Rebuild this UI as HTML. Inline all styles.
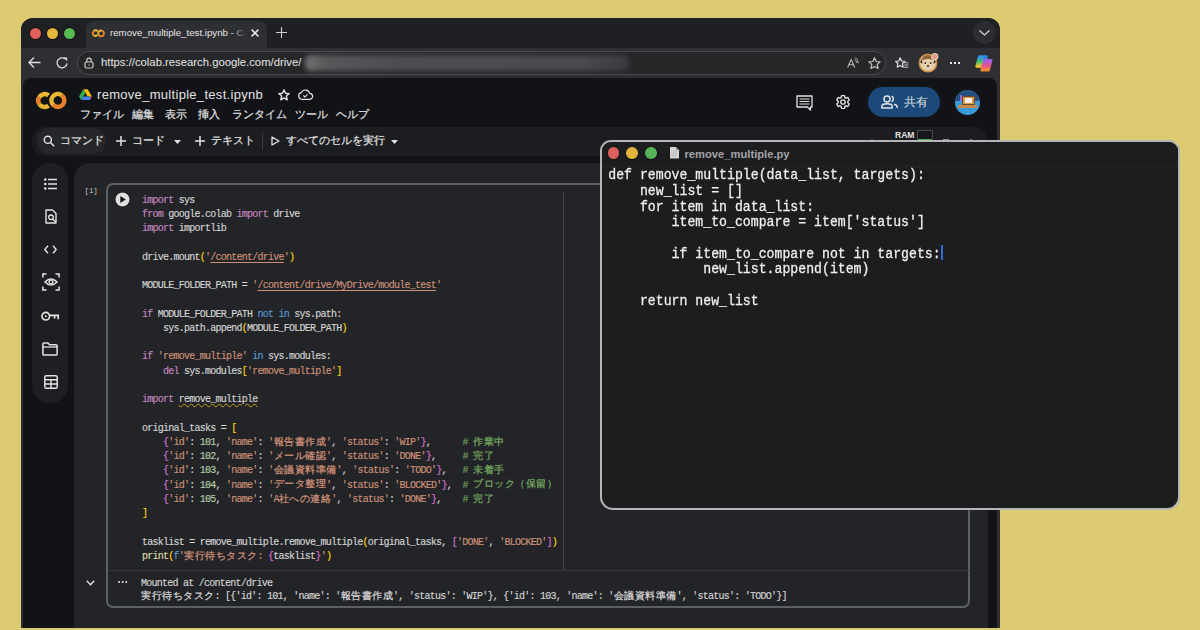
<!DOCTYPE html>
<html><head><meta charset="utf-8">
<style>
*{margin:0;padding:0;box-sizing:border-box}
html,body{width:1200px;height:630px;overflow:hidden;background:#dccb70;font-family:"Liberation Sans",sans-serif}
.a{position:absolute;white-space:pre}
svg{position:absolute;overflow:visible}
#win{position:absolute;left:21px;top:18px;width:979px;height:610px;background:#2e2f32;border-radius:12px 12px 0 0;overflow:hidden}
#tabbar{position:absolute;left:0;top:0;width:979px;height:30px;background:#1f2023}
.tl{position:absolute;top:9.5px;width:11px;height:11px;border-radius:50%;box-shadow:0 0 0 0.7px #0c0c0e}
#tab{position:absolute;left:65px;top:3px;width:181px;height:27px;background:#2e2f32;border-radius:8px 8px 0 0}
#addr{position:absolute;left:0;top:30px;width:979px;height:30px;background:#2e2f32}
#url{position:absolute;left:56px;top:3px;width:809px;height:24px;border-radius:12px;background:#262729;border:1px solid #4a4b4e}
#colab{position:absolute;left:2px;top:60px;width:974px;height:560px;background:#111316;border-radius:8px 8px 0 0;overflow:hidden}
#tool{position:absolute;left:9px;top:49px;width:955px;height:29px;background:#1c1d20;border-radius:14px}
#side{position:absolute;left:9px;top:85px;width:36px;height:240px;background:#1e1f22;border-radius:18px}
#nb{position:absolute;left:51px;top:85px;width:914px;height:480px;background:#222427;border-radius:16px 16px 0 0}
#cell{position:absolute;left:83px;top:105px;width:864px;height:425px;border:2px solid #5c6064;border-radius:7px}
.jp{font-size:10.6px;color:#e3e3e3;-webkit-text-stroke:0.2px #e3e3e3}
.code{position:absolute;font-family:"Liberation Mono",monospace;font-size:10px;letter-spacing:-0.75px;line-height:14.25px;color:#d4d4d4;white-space:pre;-webkit-text-stroke:0.15px currentColor}
i{display:inline-block;width:10.5px;font-style:normal;text-align:center;font-family:"Liberation Sans",sans-serif;font-size:9.6px;letter-spacing:0;vertical-align:top;height:14.25px;line-height:14.25px;position:relative;top:-1.2px;-webkit-text-stroke:0.25px currentColor}
.out i{height:13px;line-height:13px}
.su{color:#ce9178;text-decoration:underline;text-decoration-thickness:1px;text-underline-offset:1.5px}.w{text-decoration:underline wavy #c9a21a;text-decoration-thickness:1px}
.k{color:#c586c0}.s{color:#ce9178}.b{color:#569cd6}.n{color:#b5cea8}.c{color:#76a860}.y{color:#ffd700}.p{color:#da70d6}.f{color:#dcdcaa}
#py{position:absolute;left:600px;top:140px;width:580px;height:370px;background:#1c1d1f;border:2px solid #b5b5b7;border-radius:11px 11px 13px 13px;overflow:hidden}
.pc{position:absolute;left:6.3px;top:26px;transform:scaleY(1.12);transform-origin:0 0;font-family:"Liberation Mono",monospace;font-size:13.2px;line-height:13.95px;color:#f0f0f0;white-space:pre;-webkit-text-stroke:0.25px #f0f0f0}
</style></head><body>
<div id="win">
  <div id="tabbar">
    <div class="tl" style="left:8.5px;background:#df615b"></div>
    <div class="tl" style="left:25.8px;background:#e5b83b"></div>
    <div class="tl" style="left:43px;background:#5bb953"></div>
    <div id="tab"></div>
    <!-- tab colab icon -->
    <svg style="left:70px;top:10px" width="14" height="10" viewBox="0 0 14 10"><g fill="none" stroke-width="1.9"><path d="M6.6 3.2A2.9 2.9 0 0 0 2.6 3.3" stroke="#eab92f"/><path d="M2.6 3.3A2.9 2.9 0 0 0 2.7 7.3" stroke="#e8822a"/><path d="M2.7 7.3A2.9 2.9 0 0 0 6.6 6.9" stroke="#eab92f"/><path d="M11.3 2.8A2.9 2.9 0 0 0 7.7 7.1" stroke="#eab92f"/><path d="M7.7 7.1A2.9 2.9 0 1 0 11.3 2.8" stroke="#e8822a"/></g></svg>
    <div class="a" style="left:89px;top:9px;font-size:9.7px;color:#e6e6e6;width:139px;overflow:hidden">remove_multiple_test.ipynb - C<span style="color:#8a8a8a">o</span></div><div class="a" style="left:210px;top:8px;width:20px;height:14px;background:linear-gradient(90deg,rgba(46,47,50,0),#2e2f32 85%)"></div>
    <svg style="left:230px;top:11px" width="8" height="8" viewBox="0 0 8 8"><path d="M0.6 0.6L7.4 7.4M7.4 0.6L0.6 7.4" stroke="#ececec" stroke-width="1.5"/></svg>
    <svg style="left:255px;top:9px" width="11" height="11" viewBox="0 0 11 11"><path d="M5.5 0V11M0 5.5H11" stroke="#d0d0d0" stroke-width="1.1"/></svg>
    <div class="a" style="left:952px;top:3px;width:23px;height:23px;border-radius:50%;background:#2c2d30"></div>
    <svg style="left:958px;top:12px" width="11" height="6" viewBox="0 0 11 6"><path d="M0.5 0.5L5.5 5L10.5 0.5" fill="none" stroke="#d8d8d8" stroke-width="1.2"/></svg>
  </div>
  <div id="addr">
    <svg style="left:7px;top:9px" width="13" height="11" viewBox="0 0 13 11"><path d="M6 0.5L1 5.5L6 10.5M1 5.5H12.5" fill="none" stroke="#e0e0e0" stroke-width="1.3"/></svg>
    <svg style="left:35px;top:9px" width="12" height="12" viewBox="0 0 12 12"><path d="M11 6.4A5 5 0 1 1 9.4 2.1" fill="none" stroke="#e0e0e0" stroke-width="1.3"/><path d="M7.6 0.6L11.2 0.6L11.2 4.2Z" fill="#e0e0e0"/></svg>
    <div id="url"></div>
    <svg style="left:63px;top:9px" width="10" height="12" viewBox="0 0 10 12"><rect x="1" y="5" width="8" height="6" rx="1.5" fill="none" stroke="#cfcfcf" stroke-width="1.2"/><path d="M2.8 5V3.4a2.2 2.2 0 0 1 4.4 0V5" fill="none" stroke="#cfcfcf" stroke-width="1.2"/><rect x="4.4" y="7.4" width="1.2" height="1.2" fill="#cfcfcf"/></svg>
    <div class="a" style="left:80px;top:8px;font-size:11.3px;color:#e6e6e6">https://colab.research.google.com/drive/</div>
    <div class="a" style="left:284px;top:7px;width:324px;height:16px;background:linear-gradient(90deg,#737376,#59595c 6%,#4c4d50 30%,#4a4b4e 85%,#3a3b3e);filter:blur(2.5px);border-radius:6px"></div>
    <svg style="left:826px;top:10.9px" width="9" height="9" viewBox="0 0 9 9"><path d="M0.6 8.6L4.2 0.6L7.8 8.6M1.9 5.7H6.5" fill="none" stroke="#bcbcbc" stroke-width="1.1"/></svg>
    <svg style="left:833px;top:9px" width="5" height="7" viewBox="0 0 5 7"><path d="M0.8 0.6Q4.3 1.8 4.4 6.3M0.6 2.6Q2.6 3.3 2.7 6" fill="none" stroke="#bcbcbc" stroke-width="0.9"/></svg>
    <svg style="left:846.6px;top:8.8px" width="13" height="12.5" viewBox="0 0 13 12.5"><path d="M6.5 0.8L8.2 4.5L12.1 4.8L9.2 7.4L10.1 11.5L6.5 9.4L2.9 11.5L3.8 7.4L0.9 4.8L4.8 4.5Z" fill="none" stroke="#c4c4c4" stroke-width="1.2" stroke-linejoin="round"/></svg>
    <svg style="left:873.5px;top:9.3px" width="14" height="12" viewBox="0 0 14 12"><path d="M5.2 0.8L6.6 4L10 4.3L7.5 6.5L8.2 10.2L5.2 8.4L2.2 10.2L2.9 6.5L0.6 4.3L3.8 4Z" fill="none" stroke="#dedede" stroke-width="1.2" stroke-linejoin="round"/><path d="M9.2 5.8H13.3M9.4 8H13.3M9 10.2H13.3" stroke="#dedede" stroke-width="0.9"/></svg>
    <svg style="left:897px;top:5px" width="21" height="20" viewBox="0 0 21 20"><circle cx="10" cy="10" r="8.8" fill="#e7cfaa" stroke="#c98a42" stroke-width="1.4"/><path d="M3.5 7.5Q4.5 2.2 10 2Q15.5 2.2 16.5 7.5Q13 5.8 10 6Q7 5.8 3.5 7.5Z" fill="#8e6038"/><path d="M2 9L3.8 6.5L4.5 11Z M18 9L16.2 6.5L15.5 11Z" fill="#3a2a20"/><circle cx="7.3" cy="10" r="0.9" fill="#2a2a2a"/><circle cx="12.7" cy="10" r="0.9" fill="#2a2a2a"/><circle cx="10" cy="13" r="1" fill="#2a1a10"/><circle cx="16.8" cy="3.6" r="3.2" fill="#e39a82" stroke="#e8e0d8" stroke-width="1"/></svg>
    <div class="a" style="left:929px;top:14.1px;width:2px;height:2px;background:#e8e8e8;box-shadow:4px 0 #e8e8e8,8px 0 #e8e8e8"></div>
    <svg style="left:954.2px;top:7px" width="18" height="17" viewBox="0 0 18 17"><defs><linearGradient id="cpl" x1="0" y1="0" x2="0" y2="1"><stop offset="0" stop-color="#2f8ff2"/><stop offset="0.5" stop-color="#3fbf6a"/><stop offset="1" stop-color="#f5c12e"/></linearGradient><linearGradient id="cpr" x1="0" y1="0" x2="0" y2="1"><stop offset="0" stop-color="#a35ce6"/><stop offset="0.55" stop-color="#e8548c"/><stop offset="1" stop-color="#f28a2e"/></linearGradient></defs><path d="M4.3 1.6H11.5L8.6 11.5H1.6Z" fill="url(#cpl)" stroke="url(#cpl)" stroke-width="2.6" stroke-linejoin="round"/><path d="M9.6 5.4H16.2L13.6 15.2H6.6Z" fill="url(#cpr)" stroke="url(#cpr)" stroke-width="2.6" stroke-linejoin="round"/><path d="M9.7 1.8L12 1.6L9 5" fill="#2563d8" opacity="0.8"/></svg>
  </div>
  <div id="colab">

    <!-- colab logo -->
    <svg style="left:13px;top:14px" width="31" height="18" viewBox="0 0 31 18"><g fill="none" stroke-width="4.5"><path d="M12.58 3.35A6.45 6.45 0 0 0 3.11 5.28" stroke="#e9b732"/><path d="M3.11 5.28A6.45 6.45 0 0 0 3.42 12.2" stroke="#e8822a"/><path d="M3.42 12.2A6.45 6.45 0 0 0 12.58 13.65" stroke="#e9b732"/><path d="M25.78 3.35A6.45 6.45 0 0 0 17.5 13.22" stroke="#e9b732"/><path d="M17.5 13.22A6.45 6.45 0 1 0 25.78 3.35" stroke="#e8822a"/></g></svg>
    <!-- drive icon -->
    <svg style="left:56px;top:11px" width="13" height="11" viewBox="0 0 13 11"><path d="M4.3 0.3H8.7L13 7.6H8.6Z" fill="#fbbc04"/><path d="M4.3 0.3L0 7.6L2.2 11L6.5 3.8Z" fill="#34a853"/><path d="M2.2 11H10.8L13 7.6H4.4Z" fill="#4285f4"/><path d="M10.8 11L13 7.6H11.2Z" fill="#ea4335"/></svg>
    <div class="a" style="left:74px;top:9px;font-size:13px;letter-spacing:0.3px;color:#e3e3e3">remove_multiple_test.ipynb</div>
    <svg style="left:255px;top:11px" width="12" height="12" viewBox="0 0 12 12"><path d="M6 0.9L7.5 4.3L11.2 4.6L8.4 7.1L9.2 10.8L6 8.9L2.8 10.8L3.6 7.1L0.8 4.6L4.5 4.3Z" fill="none" stroke="#e3e3e3" stroke-width="1.4" stroke-linejoin="round"/></svg>
    <svg style="left:275px;top:11px" width="15" height="11" viewBox="0 0 15 11"><path d="M4 10.3H11.5A3 3 0 0 0 11.7 4.3A4.5 4.5 0 0 0 3.3 3.6A3.4 3.4 0 0 0 4 10.3Z" fill="none" stroke="#e3e3e3" stroke-width="1.2"/><path d="M5.3 6.5L6.9 8L9.6 5.3" fill="none" stroke="#e3e3e3" stroke-width="1.1"/></svg>
    <div class="a jp" style="left:57px;top:30px">ファイル</div>
    <div class="a jp" style="left:109px;top:30px">編集</div>
    <div class="a jp" style="left:142px;top:30px">表示</div>
    <div class="a jp" style="left:175px;top:30px">挿入</div>
    <div class="a jp" style="left:209px;top:30px">ランタイム</div>
    <div class="a jp" style="left:272px;top:30px">ツール</div>
    <div class="a jp" style="left:313px;top:30px">ヘルプ</div>
    <!-- right header -->
    <svg style="left:773px;top:17px" width="17" height="16" viewBox="0 0 17 16"><path d="M1 1H16V12H14.5V15L11.5 12H1Z" fill="none" stroke="#e3e3e3" stroke-width="1.3" stroke-linejoin="round"/><path d="M3.5 4H13.5M3.5 6.5H13.5M3.5 9H13.5" stroke="#e3e3e3" stroke-width="1.2"/></svg>
    <svg style="left:812px;top:16px" width="16" height="16" viewBox="0 0 24 24"><path fill="none" stroke="#e3e3e3" stroke-width="2" d="M19.14 12.94c.04-.3.06-.61.06-.94 0-.32-.02-.64-.07-.94l2.03-1.58a.49.49 0 0 0 .12-.61l-1.92-3.32a.488.488 0 0 0-.59-.22l-2.39.96c-.5-.38-1.03-.7-1.62-.94l-.36-2.54a.484.484 0 0 0-.48-.41h-3.84c-.24 0-.43.17-.47.41l-.36 2.54c-.59.24-1.130.57-1.62.94l-2.39-.96c-.22-.08-.47 0-.59.22L2.74 8.87c-.12.21-.08.47.12.61l2.03 1.58c-.05.3-.09.63-.09.94s.02.64.07.94l-2.03 1.58a.49.49 0 0 0-.12.61l1.92 3.32c.12.22.37.29.59.22l2.39-.96c.5.38 1.03.7 1.62.94l.36 2.54c.05.24.24.41.48.41h3.84c.24 0 .44-.17.47-.41l.36-2.54c.59-.24 1.13-.56 1.62-.94l2.39.96c.22.08.47 0 .59-.22l1.920-3.32c.12-.22.07-.47-.12-.61l-2.01-1.58z"/><circle cx="12" cy="12" r="3.3" fill="none" stroke="#e3e3e3" stroke-width="2"/></svg>
    <div class="a" style="left:845px;top:9px;width:72px;height:30px;border-radius:15px;background:#1b4a7a"></div>
    <svg style="left:858px;top:17px" width="17" height="14" viewBox="0 0 17 14"><circle cx="6" cy="4" r="3" fill="none" stroke="#e3e3e3" stroke-width="1.5"/><path d="M0.8 13V11.5Q0.8 8.8 6 8.8Q11.2 8.8 11.2 11.5V13Z" fill="none" stroke="#e3e3e3" stroke-width="1.5" stroke-linejoin="round"/><path d="M10.5 1.2A3 3 0 0 1 10.5 6.8M13 9.2Q16.2 10 16.2 12V13" fill="none" stroke="#e3e3e3" stroke-width="1.5"/></svg>
    <div class="a" style="left:881px;top:16px;font-size:12px;color:#e3e3e3">共有</div>
    <div class="a" style="left:932px;top:12px;width:25px;height:25px;border-radius:50%;background:#3b9ad8;overflow:hidden">
      <div class="a" style="left:0;top:0;width:25px;height:11px;background:#24507f"></div>
      <div class="a" style="left:7px;top:6px;width:13px;height:9px;background:#d89a3a;border:1px solid #6a4a2a"></div>
      <div class="a" style="left:10px;top:8px;width:7px;height:5px;background:#f0f0f0"></div>
      <div class="a" style="left:3px;top:15px;width:19px;height:3px;background:#c88a4a"></div>
      <div class="a" style="left:5px;top:5px;width:2px;height:6px;background:#9a6ad8"></div>
    </div>
    <div id="tool"></div>
    <!-- toolbar -->
    <div class="a" style="left:14px;top:50px;width:69px;height:26px;border-radius:13px;background:#25272a"></div>
    <svg style="left:20px;top:57px" width="12" height="12" viewBox="0 0 12 12"><circle cx="4.8" cy="4.8" r="3.6" fill="none" stroke="#e3e3e3" stroke-width="1.4"/><path d="M7.5 7.5L11.2 11.2" stroke="#e3e3e3" stroke-width="1.5"/></svg>
    <div class="a jp" style="left:37px;top:56px">コマンド</div>
    <svg style="left:93px;top:58px" width="10" height="10" viewBox="0 0 10 10"><path d="M5 0V10M0 5H10" stroke="#e3e3e3" stroke-width="1.5"/></svg>
    <div class="a jp" style="left:109px;top:56px">コード</div>
    <svg style="left:151px;top:62px" width="7" height="4" viewBox="0 0 7 4"><path d="M0 0H7L3.5 4Z" fill="#e3e3e3"/></svg>
    <svg style="left:172px;top:58px" width="10" height="10" viewBox="0 0 10 10"><path d="M5 0V10M0 5H10" stroke="#e3e3e3" stroke-width="1.5"/></svg>
    <div class="a jp" style="left:188px;top:56px">テキスト</div>
    <div class="a" style="left:239px;top:55px;width:1px;height:17px;background:#3c3d40"></div>
    <svg style="left:248px;top:58px" width="9" height="10" viewBox="0 0 9 10"><path d="M1 1L8 5L1 9Z" fill="none" stroke="#e3e3e3" stroke-width="1.3" stroke-linejoin="round"/></svg>
    <div class="a jp" style="left:263px;top:56px">すべてのセルを実行</div>
    <svg style="left:368px;top:62px" width="7" height="4" viewBox="0 0 7 4"><path d="M0 0H7L3.5 4Z" fill="#e3e3e3"/></svg>
    <svg style="left:842px;top:61px" width="8" height="6" viewBox="0 0 8 6"><path d="M0.5 3L3 5.5L7.5 0.5" fill="none" stroke="#5bb974" stroke-width="1.3"/></svg>
    <div class="a" style="left:872px;top:52px;font-size:8.5px;font-weight:bold;color:#e3e3e3">RAM</div>
    <div class="a" style="left:894px;top:52px;width:16px;height:10px;border:1px solid #4a4d51;border-radius:2px;background:#17181a;border-bottom:1.5px solid #4caf50"></div>
    <svg style="left:944px;top:61px" width="8" height="5" viewBox="0 0 8 5"><path d="M0.6 4.4L4 1L7.4 4.4" fill="none" stroke="#e3e3e3" stroke-width="1.4"/></svg><div class="a" style="left:920px;top:61px;width:6px;height:3px;background:#8a8f94"></div>
    <!-- sidebar -->
    <div id="side"></div>
    <svg style="left:21px;top:100px" width="13" height="12" viewBox="0 0 13 12"><circle cx="1.3" cy="1.5" r="1.3" fill="#e3e3e3"/><circle cx="1.3" cy="6" r="1.3" fill="#e3e3e3"/><circle cx="1.3" cy="10.5" r="1.3" fill="#e3e3e3"/><path d="M4 1.5H13M4 6H13M4 10.5H13" stroke="#e3e3e3" stroke-width="1.5"/></svg>
    <svg style="left:22px;top:131px" width="12" height="15" viewBox="0 0 12 15"><path d="M1 1H7.5L11 4.5V14H1Z" fill="none" stroke="#e3e3e3" stroke-width="1.4" stroke-linejoin="round"/><circle cx="6" cy="8.3" r="2.3" fill="none" stroke="#e3e3e3" stroke-width="1.3"/><path d="M7.6 10L10.5 12.8" stroke="#e3e3e3" stroke-width="1.4"/></svg>
    <svg style="left:21px;top:167px" width="13" height="9" viewBox="0 0 13 9"><path d="M4 0.8L0.8 4.5L4 8.2M9 0.8L12.2 4.5L9 8.2" fill="none" stroke="#e3e3e3" stroke-width="1.4"/></svg>
    <svg style="left:18.6px;top:195px" width="18" height="18" viewBox="0 0 18 18"><path d="M0.9 4.5V0.9H4.5M13.5 0.9H17.1V4.5M17.1 13.5V17.1H13.5M4.5 17.1H0.9V13.5" fill="none" stroke="#e3e3e3" stroke-width="1.5"/><path d="M3 9Q9 2.8 15 9Q9 15.2 3 9Z" fill="none" stroke="#e3e3e3" stroke-width="1.5"/><circle cx="9" cy="9" r="1.9" fill="none" stroke="#e3e3e3" stroke-width="1.4"/></svg>
    <svg style="left:17.8px;top:233px" width="18" height="11" viewBox="0 0 18 11"><circle cx="4.8" cy="5.2" r="3.8" fill="none" stroke="#e3e3e3" stroke-width="1.7"/><circle cx="4.8" cy="5.2" r="1" fill="#e3e3e3"/><path d="M8.6 4.3H17.2V8.2M13.6 4.3V7.6" fill="none" stroke="#e3e3e3" stroke-width="1.7"/></svg>
    <svg style="left:19px;top:264px" width="16" height="14" viewBox="0 0 16 14"><path d="M2 0.9H6L7.6 2.7H14Q15.1 2.7 15.1 3.8V11.9Q15.1 13 14 13H2Q0.9 13 0.9 11.9V2Q0.9 0.9 2 0.9Z" fill="none" stroke="#e3e3e3" stroke-width="1.5" stroke-linejoin="round"/><path d="M0.9 5H15.1" stroke="#e3e3e3" stroke-width="1.3"/></svg>
    <svg style="left:20.5px;top:296.5px" width="14" height="14" viewBox="0 0 14 14"><rect x="0.8" y="0.8" width="12.4" height="12.4" rx="1.5" fill="none" stroke="#e3e3e3" stroke-width="1.5"/><path d="M0.8 4.8H13.2M0.8 9H13.2M7 4.8V13.2" stroke="#e3e3e3" stroke-width="1.4"/></svg>
    <!-- notebook -->
    <div id="nb"></div>
    <div class="a" style="left:61.5px;top:108.5px;font-family:'Liberation Mono',monospace;font-size:7.4px;color:#c8c8c8">[1]</div>
    <div id="cell"></div>
    <svg style="left:91.6px;top:113.5px" width="15" height="15" viewBox="0 0 15 15"><circle cx="7.5" cy="7.5" r="7.8" fill="#141517"/><circle cx="7.5" cy="7.5" r="7" fill="#dedede"/><path d="M5.3 4V11L10.8 7.5Z" fill="#151618"/></svg>
    <div class="a" style="left:540px;top:114px;width:1px;height:378px;background:#3f4246"></div>
    <div class="code" style="left:119px;top:115.5px"><span class="k">import</span> sys
<span class="k">from</span> google.colab <span class="k">import</span> drive
<span class="k">import</span> importlib

drive.mount<span class="y">(</span><span class="s">&#x27;<span class="su">/content/drive</span>&#x27;</span><span class="y">)</span>

MODULE_FOLDER_PATH = <span class="s">&#x27;<span class="su">/content/drive/MyDrive/module_test</span>&#x27;</span>

<span class="k">if</span> MODULE_FOLDER_PATH <span class="b">not</span> <span class="b">in</span> sys.path:
    sys.path.append<span class="y">(</span>MODULE_FOLDER_PATH<span class="y">)</span>

<span class="k">if</span> <span class="s">&#x27;remove_multiple&#x27;</span> <span class="b">in</span> sys.modules:
    <span class="k">del</span> sys.modules<span class="y">[</span><span class="s">&#x27;remove_multiple&#x27;</span><span class="y">]</span>

<span class="k">import</span> <span class="w">remove_multiple</span>

original_tasks = <span class="y">[</span>
    <span class="p">{</span><span class="s">&#x27;id&#x27;</span>: <span class="n">101</span>, <span class="s">&#x27;name&#x27;</span>: <span class="s">&#x27;<i>報</i><i>告</i><i>書</i><i>作</i><i>成</i>&#x27;</span>, <span class="s">&#x27;status&#x27;</span>: <span class="s">&#x27;WIP&#x27;</span><span class="p">}</span>,      <span class="c"># <i>作</i><i>業</i><i>中</i></span>
    <span class="p">{</span><span class="s">&#x27;id&#x27;</span>: <span class="n">102</span>, <span class="s">&#x27;name&#x27;</span>: <span class="s">&#x27;<i>メ</i><i>ー</i><i>ル</i><i>確</i><i>認</i>&#x27;</span>, <span class="s">&#x27;status&#x27;</span>: <span class="s">&#x27;DONE&#x27;</span><span class="p">}</span>,     <span class="c"># <i>完</i><i>了</i></span>
    <span class="p">{</span><span class="s">&#x27;id&#x27;</span>: <span class="n">103</span>, <span class="s">&#x27;name&#x27;</span>: <span class="s">&#x27;<i>会</i><i>議</i><i>資</i><i>料</i><i>準</i><i>備</i>&#x27;</span>, <span class="s">&#x27;status&#x27;</span>: <span class="s">&#x27;TODO&#x27;</span><span class="p">}</span>,   <span class="c"># <i>未</i><i>着</i><i>手</i></span>
    <span class="p">{</span><span class="s">&#x27;id&#x27;</span>: <span class="n">104</span>, <span class="s">&#x27;name&#x27;</span>: <span class="s">&#x27;<i>デ</i><i>ー</i><i>タ</i><i>整</i><i>理</i>&#x27;</span>, <span class="s">&#x27;status&#x27;</span>: <span class="s">&#x27;BLOCKED&#x27;</span><span class="p">}</span>,  <span class="c"># <i>ブ</i><i>ロ</i><i>ッ</i><i>ク</i><i>（</i><i>保</i><i>留</i><i>）</i></span>
    <span class="p">{</span><span class="s">&#x27;id&#x27;</span>: <span class="n">105</span>, <span class="s">&#x27;name&#x27;</span>: <span class="s">&#x27;A<i>社</i><i>へ</i><i>の</i><i>連</i><i>絡</i>&#x27;</span>, <span class="s">&#x27;status&#x27;</span>: <span class="s">&#x27;DONE&#x27;</span><span class="p">}</span>,    <span class="c"># <i>完</i><i>了</i></span>
<span class="y">]</span>

tasklist = remove_multiple.remove_multiple<span class="y">(</span>original_tasks, <span class="p">[</span><span class="s">&#x27;DONE&#x27;</span>, <span class="s">&#x27;BLOCKED&#x27;</span><span class="p">]</span><span class="y">)</span>
<span class="f">print</span><span class="y">(</span><span class="b">f</span><span class="s">&#x27;<i>実</i><i>行</i><i>待</i><i>ち</i><i>タ</i><i>ス</i><i>ク</i>: </span><span class="p">{</span>tasklist<span class="p">}</span><span class="s">&#x27;</span><span class="y">)</span></div>
    <div class="a" style="left:85px;top:492px;width:861px;height:1px;background:#34373b"></div>
    <svg style="left:63px;top:502px" width="9" height="6" viewBox="0 0 9 6"><path d="M0.8 0.8L4.5 4.8L8.2 0.8" fill="none" stroke="#e3e3e3" stroke-width="1.4"/></svg>
    <div class="a" style="left:94.5px;top:503px;width:2.4px;height:2.4px;border-radius:50%;background:#e3e3e3;box-shadow:3.6px 0 #e3e3e3,7.2px 0 #e3e3e3"></div>
    <div class="code out" style="left:118px;top:499px;line-height:13px;color:#d5d5d5">Mounted at /content/drive
<i>実</i><i>行</i><i>待</i><i>ち</i><i>タ</i><i>ス</i><i>ク</i>: [{&#x27;id&#x27;: 101, &#x27;name&#x27;: &#x27;<i>報</i><i>告</i><i>書</i><i>作</i><i>成</i>&#x27;, &#x27;status&#x27;: &#x27;WIP&#x27;}, {&#x27;id&#x27;: 103, &#x27;name&#x27;: &#x27;<i>会</i><i>議</i><i>資</i><i>料</i><i>準</i><i>備</i>&#x27;, &#x27;status&#x27;: &#x27;TODO&#x27;}]</div>
  </div>
</div>
<div id="py">
  <div class="a" style="left:0;top:0;width:576px;height:25px;background:#1c1d1f;border-bottom:1px dotted #2e2f32"></div>
  <div class="a" style="left:5.5px;top:5.2px;width:11.7px;height:11.7px;border-radius:50%;background:#dc5f5b;box-shadow:0 0 0 0.6px #111"></div>
  <div class="a" style="left:24.2px;top:5.2px;width:11.7px;height:11.7px;border-radius:50%;background:#e2b33c;box-shadow:0 0 0 0.6px #111"></div>
  <div class="a" style="left:43.2px;top:5.2px;width:11.7px;height:11.7px;border-radius:50%;background:#56b459;box-shadow:0 0 0 0.6px #111"></div>
  <svg style="left:67.7px;top:4.7px" width="9" height="11.5" viewBox="0 0 9 11.5"><path d="M0 0H5.8L9 3.2V11.5H0Z" fill="#d4d4d4"/><path d="M5.8 0V3.2H9" fill="#9a9a9a"/><path d="M1.6 5H7.4M1.6 6.8H7.4M1.6 8.6H7.4" stroke="#b0b0b0" stroke-width="0.6"/></svg>
  <div class="a" style="left:82.5px;top:5.5px;font-size:11.2px;font-weight:bold;color:#a4a4a6">remove_multiple.py</div>
  <div class="pc">def remove_multiple(data_list, targets):
    new_list = []
    for item in data_list:
        item_to_compare = item['status']

        if item_to_compare not in targets:
            new_list.append(item)

    return new_list</div>
  <div class="a" style="left:339.3px;top:103px;width:2px;height:15px;background:#2f6ad8"></div>
</div>
</body></html>
